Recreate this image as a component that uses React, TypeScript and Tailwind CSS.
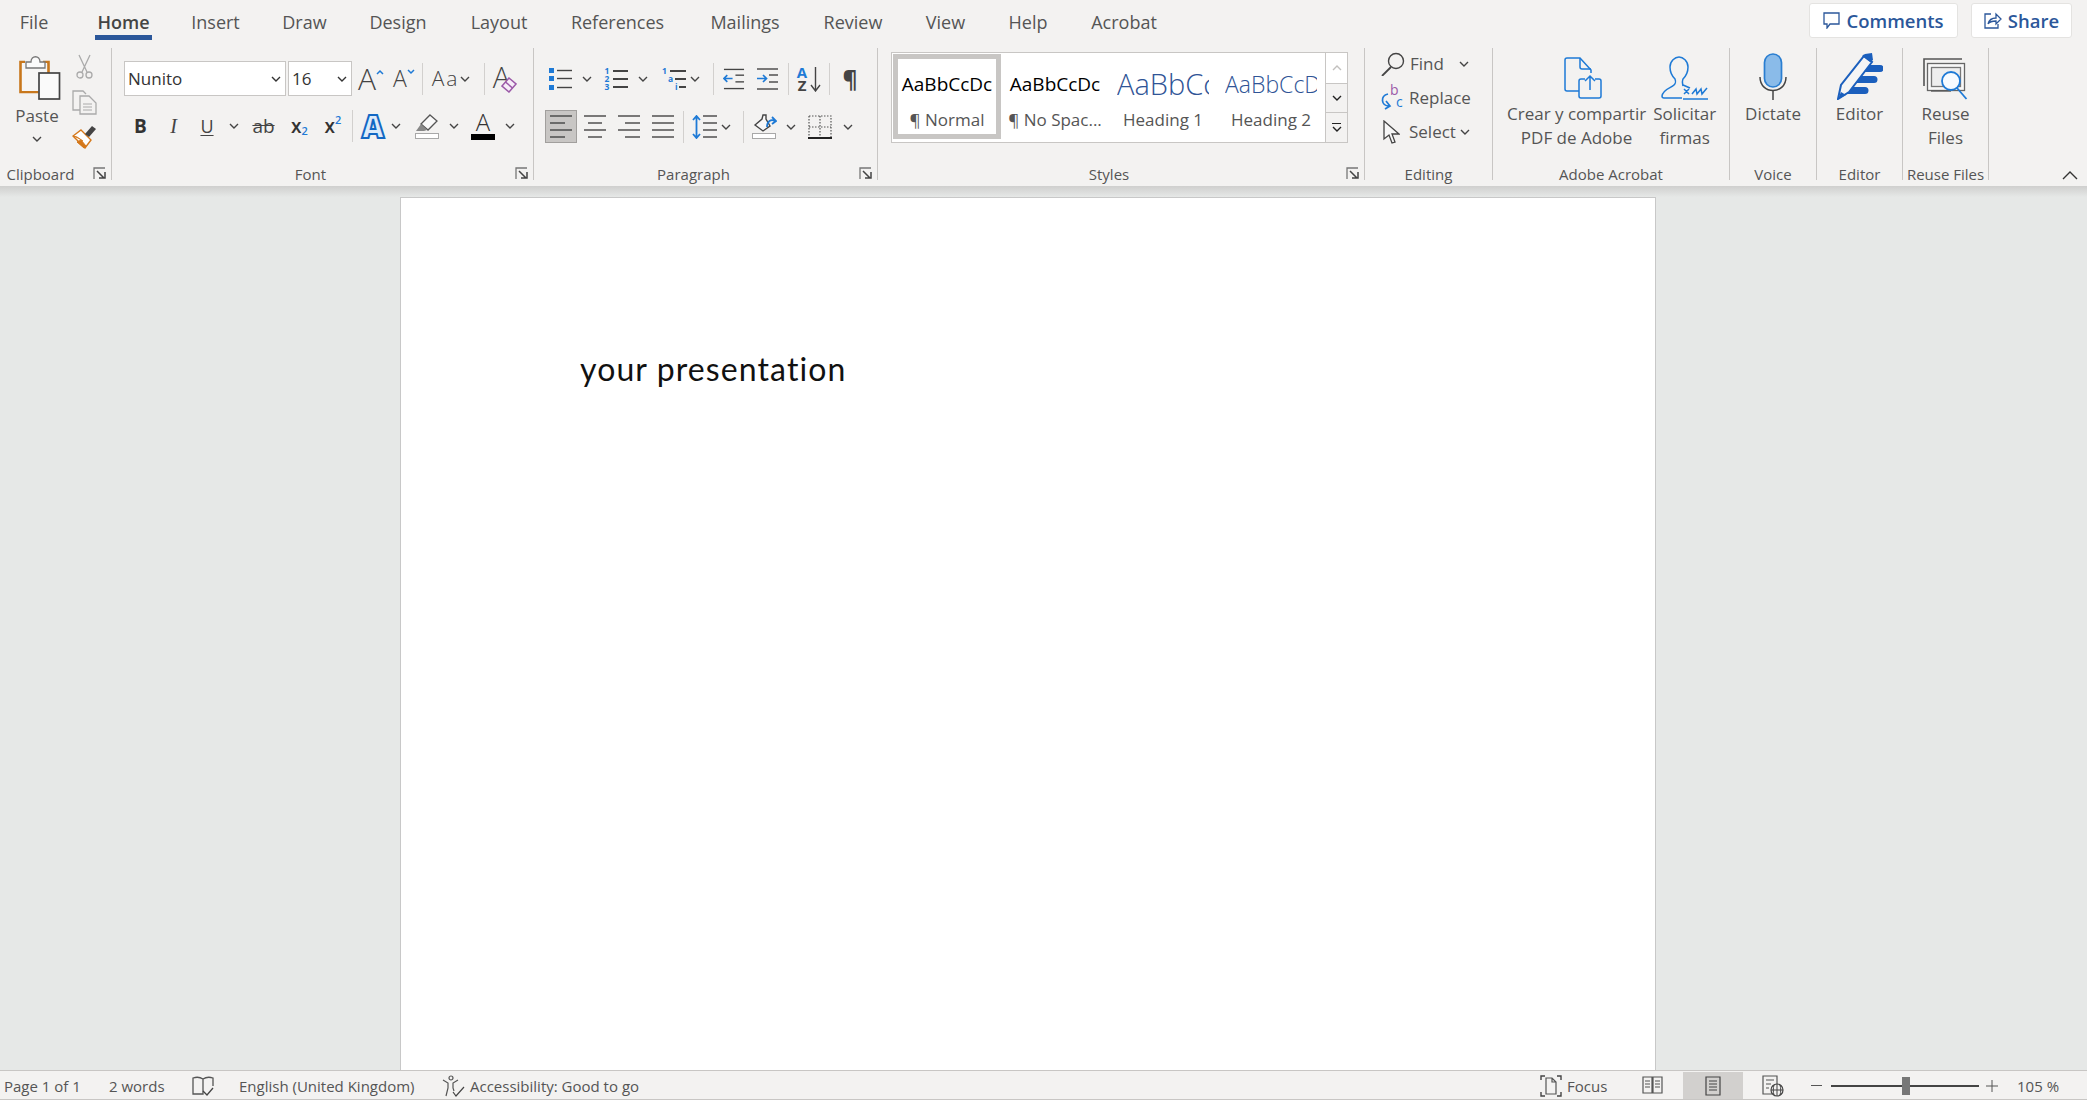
import React from "react";

const ink = "#444444";
const blue = "#1e7ad6";

function Chev({ className = "", c = "#444" }: { className?: string; c?: string }) {
  return (
    <svg width="10" height="6" viewBox="0 0 10 6" className={`shrink-0 ${className}`}>
      <path d="M1 1l4 4 4-4" fill="none" stroke={c} strokeWidth="1.4" />
    </svg>
  );
}

function Launcher() {
  return (
    <svg width="13" height="13" viewBox="0 0 13 13" className="absolute right-[5px] bottom-[4px]">
      <path d="M1 12V1h11" fill="none" stroke="#777" strokeWidth="1.3" />
      <path d="M4 4l7 7M6 11h6V5" fill="none" stroke="#444" strokeWidth="1.5" />
    </svg>
  );
}

function Group({ w, label, launcher, children }: { w: string; label: string; launcher?: boolean; children: React.ReactNode }) {
  return (
    <div className={`${w} h-[132px] flex flex-col border-r border-[#c8c6c4] shrink-0`}>
      <div className="flex-1 min-h-0">{children}</div>
      <div className="relative h-[20px] mb-[-4px] flex justify-center items-center text-[15px] leading-[20px] text-[#555] whitespace-nowrap">
        <span className={launcher ? (label === "Clipboard" ? "pr-[30px]" : "pr-[24px]") : ""}>{label}</span>
        {launcher && <Launcher />}
      </div>
    </div>
  );
}

function VSep({ className = "" }: { className?: string }) {
  return <div className={`w-px h-[32px] bg-[#d2d0ce] shrink-0 ${className}`} />;
}

function Slot({ w, children }: { w: string; children?: React.ReactNode }) {
  return <div className={`${w} shrink-0 h-full flex items-center justify-center`}>{children}</div>;
}

function PasteIcon() {
  return (
    <svg width="42" height="46" viewBox="0 0 42 46" className="ml-[6px]">
      <path d="M6 8H1.5v30h18M24 8h5.500v11" fill="#fff" stroke="#c8771c" strokeWidth="2.600" />
      <rect x="3" y="9" width="25" height="28" fill="#f7f6f5" />
      <path d="M7 14V8h5c0-7 9-7 9 0h5v6z" fill="#fbfbfb" stroke="#777" strokeWidth="1.300" />
      <rect x="20" y="19" width="20.500" height="26" fill="#fafafa" stroke="#444" strokeWidth="1.700" />
    </svg>
  );
}
function CutIcon() {
  return (
    <svg width="17" height="26" viewBox="0 0 17 26">
      <path d="M3 1l8 17M14 1L6 18" fill="none" stroke="#aaa" strokeWidth="1.300" />
      <circle cx="4" cy="21" r="3" fill="none" stroke="#aaa" strokeWidth="1.300" />
      <circle cx="13" cy="21" r="3" fill="none" stroke="#aaa" strokeWidth="1.300" />
    </svg>
  );
}
function CopyIcon() {
  return (
    <svg width="25" height="25" viewBox="0 0 25 25">
      <path d="M8 20H1V1h10l3 3" fill="none" stroke="#aaa" strokeWidth="1.300" />
      <path d="M8 6h9l7 7v11H8z" fill="#f3f2f1" stroke="#aaa" strokeWidth="1.300" />
      <path d="M11 14h9M11 17h9M11 20h9" stroke="#aaa" />
    </svg>
  );
}
function PainterIcon() {
  return (
    <svg width="25" height="24" viewBox="0 0 25 24">
      <path d="M9 5l10 10-6 8L1 11z" fill="#fff" stroke="#d5781a" strokeWidth="1.400" />
      <path d="M5 17l4-2 5 6-2 2zM1 11l4 1 6 4" fill="#d5781a" stroke="#d5781a" />
      <path d="M13 9l7-8 4 3-7 8z" fill="#444" />
    </svg>
  );
}

function Sel({ w, v }: { w: string; v: string }) {
  return (
    <div className={`${w} h-[35px] bg-white border border-[#c8c6c4] flex items-center justify-between pl-[3px] pr-[4px] text-[17px] text-[#333] shrink-0`}>
      <span>{v}</span>
      <Chev c="#333" />
    </div>
  );
}

function Lines({ x = 0, rows, w = 20 }: { x?: number; rows: number[]; w?: number }) {
  return (
    <>
      {rows.map((y) => (
        <line key={y} x1={x} x2={x + w} y1={y} y2={y} stroke={ink} strokeWidth="1.400" />
      ))}
    </>
  );
}

function Bullets() {
  return (
    <svg width="24" height="24" viewBox="0 0 24 24">
      <rect x="0" y="1" width="5" height="5" fill={blue} />
      <rect x="0" y="9" width="5" height="5" fill={blue} />
      <rect x="0" y="18" width="5" height="5" fill={blue} />
      <Lines x={8} rows={[3.500, 11.500, 20.500]} w={15} />
    </svg>
  );
}

function ListRow({ mark, boxW, lineW }: { mark: string; boxW: string; lineW: string }) {
  return (
    <div className="h-[8px] flex items-center justify-end">
      <span className={`${boxW} text-[8.500px] leading-[8px] font-bold text-[#1e7ad6]`}>{mark}</span>
      <div className={`${lineW} h-[1.500px] bg-[#444]`} />
    </div>
  );
}
function Numbers() {
  return (
    <div className="w-[23px] flex flex-col">
      <ListRow mark="1" boxW="w-[8px]" lineW="w-[15px]" />
      <ListRow mark="2" boxW="w-[8px]" lineW="w-[15px]" />
      <ListRow mark="3" boxW="w-[8px]" lineW="w-[15px]" />
    </div>
  );
}
function Multi() {
  return (
    <div className="w-[24px] flex flex-col">
      <ListRow mark="1" boxW="w-[8px]" lineW="w-[16px]" />
      <ListRow mark="a" boxW="w-[7px]" lineW="w-[11px]" />
      <ListRow mark="i" boxW="w-[4px]" lineW="w-[7px]" />
    </div>
  );
}
function Indent({ dir }: { dir: "l" | "r" }) {
  return (
    <svg width="23" height="22" viewBox="0 0 23 22">
      <Lines x={1} rows={[1]} w={21} />
      <Lines x={13} rows={[7, 14]} w={9} />
      <Lines x={1} rows={[21]} w={21} />
      {dir === "l" ? (
        <path d="M10 10.500H1M4.500 7l-3.500 3.500L4.500 14" fill="none" stroke={blue} strokeWidth="1.700" />
      ) : (
        <path d="M1 10.500h9M7 7l3.500 3.500L7 14" fill="none" stroke={blue} strokeWidth="1.700" />
      )}
    </svg>
  );
}
function SortIcon() {
  return (
    <div className="flex items-center gap-[3px]">
      <div className="flex flex-col items-center text-[15px] leading-[13px] font-bold">
        <span className="text-[#1e7ad6]">A</span>
        <span className="text-[#444]">Z</span>
      </div>
      <svg width="11" height="25" viewBox="0 0 11 25">
        <path d="M5.500 0v24M1 18l4.500 6 4.500-6" fill="none" stroke={ink} strokeWidth="1.400" />
      </svg>
    </div>
  );
}
function AlignIcon({ kind }: { kind: "l" | "c" | "r" | "j" }) {
  const rows = [1, 8, 15, 22];
  const spec: Record<string, [number, number][]> = {
    l: [[0, 22], [0, 15], [0, 22], [0, 15]],
    c: [[0, 22], [4, 14], [0, 22], [4, 14]],
    r: [[0, 22], [7, 15], [0, 22], [7, 15]],
    j: [[0, 22], [0, 22], [0, 22], [0, 22]],
  };
  return (
    <svg width="22" height="23" viewBox="0 0 22 23">
      {rows.map((y, i) => (
        <line key={y} x1={spec[kind][i][0]} x2={spec[kind][i][0] + spec[kind][i][1]} y1={y} y2={y} stroke={ink} strokeWidth="1.400" />
      ))}
    </svg>
  );
}
function Spacing() {
  return (
    <svg width="25" height="24" viewBox="0 0 25 24">
      <path d="M4.500 1v22M1 5l3.500-4L8 5M1 19l3.500 4L8 19" fill="none" stroke={blue} strokeWidth="1.800" />
      <Lines x={11} rows={[1, 8, 15, 22]} w={14} />
    </svg>
  );
}
function Shading() {
  return (
    <svg width="25" height="25" viewBox="0 0 25 25">
      <path d="M3 11l7-6 1-4h3v4l4 7-7 5z" fill="#f8f8f8" stroke={ink} strokeWidth="1.400" />
      <path d="M15 13c0-6 4-8 8-6M20 3l4 4-4 3" fill="none" stroke={blue} strokeWidth="1.800" />
      <rect x="0.500" y="19.500" width="23" height="5" fill="#fff" stroke="#a8a8a8" />
    </svg>
  );
}
function Borders() {
  return (
    <svg width="24" height="24" viewBox="0 0 24 24">
      <path d="M1 1h22v22M1 1v22M12 1v22M1 12h22" fill="none" stroke="#555" strokeWidth="1.200" strokeDasharray="1.500 1.500" />
      <path d="M0 23h24" stroke="#222" strokeWidth="2" />
    </svg>
  );
}
function Highlighter() {
  return (
    <svg width="24" height="25" viewBox="0 0 24 25">
      <path d="M15 1l7 6-9 9-7-6z" fill="#f9f9f9" stroke="#555" strokeWidth="1.300" />
      <path d="M6 10l6 6-3 1H1z" fill="#888" />
      <rect x="0.500" y="19.500" width="23" height="5" fill="#fff" stroke="#a8a8a8" />
    </svg>
  );
}
function ClearFmt() {
  return (
    <svg width="16" height="16" viewBox="0 0 16 16" className="ml-[-9px] mt-[12px] shrink-0">
      <path d="M8 1l7 6-7 8-7-6z" fill="#f6edf8" stroke="#9b59a8" strokeWidth="1.500" />
      <path d="M4.500 5l7 6" stroke="#9b59a8" strokeWidth="1.500" />
    </svg>
  );
}

function FindIcon() {
  return (
    <svg width="24" height="24" viewBox="0 0 24 24">
      <circle cx="15" cy="9" r="7.500" fill="none" stroke={ink} strokeWidth="1.400" />
      <path d="M10 15L1 24" stroke={ink} strokeWidth="1.800" />
    </svg>
  );
}
function ReplaceIcon() {
  return (
    <div className="relative w-[22px] h-[24px] text-[14px] leading-[14px]">
      <span className="absolute left-[9px] top-[-3px] text-[#9b59a8]">b</span>
      <span className="absolute left-[15px] top-[9px] text-[#1e7ad6]">c</span>
      <svg width="12" height="18" viewBox="0 0 12 18" className="absolute left-0 top-[6px]">
        <path d="M7 2C-1 4 0 14 8 14M5 9l4 5-5 3" fill="none" stroke={blue} strokeWidth="1.700" />
      </svg>
    </div>
  );
}
function SelectIcon() {
  return (
    <svg width="17" height="24" viewBox="0 0 17 24">
      <path d="M1 1v18l5-4 3 8 3-1-3-8h7z" fill="#f7f7f7" stroke={ink} strokeWidth="1.300" />
    </svg>
  );
}
function CreatePdf() {
  return (
    <svg width="38" height="43" viewBox="0 0 38 43">
      <path d="M15 34H3a2 2 0 0 1-2-2V3a2 2 0 0 1 2-2h13l11 12v3" fill="none" stroke={blue} strokeWidth="1.500" />
      <path d="M16 1v9a2 2 0 0 0 2 2h9" fill="none" stroke={blue} strokeWidth="1.500" />
      <path d="M21 22h-4a2 2 0 0 0-2 2v15a2 2 0 0 0 2 2h18a2 2 0 0 0 2-2V24a2 2 0 0 0-2-2h-4" fill="#f3f2f1" stroke={blue} strokeWidth="1.500" />
      <path d="M26 33V20M21 24l5-5 5 5" fill="none" stroke={blue} strokeWidth="1.500" />
    </svg>
  );
}
function Signature() {
  return (
    <svg width="48" height="44" viewBox="0 0 48 44">
      <path d="M22 30c-1-5-1-4 0-7 3-3 5-7 5-12 0-6-5-10-9-10s-9 4-9 10c0 5 2 9 5 12 1 3 1 4-1 6-3 3-11 4-12 11 0 1 1 2 2 2h18" fill="none" stroke={blue} strokeWidth="1.500" />
      <path d="M22 29l7 3" stroke={blue} strokeWidth="1.500" />
      <path d="M23 33l5 5M28 33l-5 5M31 38l4-5 1 5 4-5 1 5 5-6" fill="none" stroke={blue} strokeWidth="1.500" />
      <path d="M22 43h25" stroke={blue} strokeWidth="1.500" />
    </svg>
  );
}
function Mic() {
  return (
    <svg width="28" height="47" viewBox="0 0 28 47">
      <rect x="5.500" y="1" width="17" height="33" rx="8.500" fill="#8abbe9" stroke="#2a7ed1" strokeWidth="1.700" />
      <path d="M1 24c0 18 26 18 26 0" fill="none" stroke="#444" strokeWidth="1.500" />
      <path d="M14 37v10" stroke="#444" strokeWidth="1.500" />
    </svg>
  );
}
function EditorIcon() {
  return (
    <svg width="46" height="48" viewBox="0 0 46 48">
      <path d="M26 13h17a3.500 3.500 0 0 1 0 7H20zM18 24h19a3.500 3.500 0 0 1 0 7H12zM10 35h18a3.500 3.500 0 0 1 0 7H5z" fill="#1b5fbd" />
      <path d="M1 47l3-14L27 4l8 6-23 30z" fill="#f5f5f5" stroke="#1b5fbd" strokeWidth="2" />
      <path d="M28 2l7-1 1 7-3 2-8-6z" fill="#1b5fbd" />
      <path d="M1 47l3-7 5 3z" fill="#1b5fbd" />
    </svg>
  );
}
function ReuseIcon() {
  return (
    <svg width="45" height="42" viewBox="0 0 45 42">
      <path d="M1 28V1h38" fill="none" stroke="#555" strokeWidth="1.600" />
      <rect x="4.500" y="5.500" width="37" height="27" fill="#f8f8f8" stroke="#666" strokeWidth="1.300" />
      <rect x="8.500" y="9.500" width="29" height="19" fill="#eee" stroke="#777" strokeWidth="1.300" />
      <path d="M8 33h20" stroke="#555" strokeWidth="1.300" />
      <circle cx="28" cy="23" r="9" fill="#f7fbff" stroke={blue} strokeWidth="1.800" />
      <path d="M34 30l9.500 11" stroke={blue} strokeWidth="1.800" />
    </svg>
  );
}

function BigBtn({ icon, lines, iconBox }: { icon: React.ReactNode; lines: string[]; iconBox: string }) {
  return (
    <div className="flex flex-col items-center text-[17px] leading-[24px] text-[#555] whitespace-nowrap">
      <div className={`${iconBox} flex items-end justify-center`}>{icon}</div>
      {lines.map((l) => (
        <span key={l}>{l}</span>
      ))}
    </div>
  );
}

const tabs: [string, string][] = [
  ["File", "w-[30px] ml-[19px]"],
  ["Home", "w-[57px] ml-[46px]"],
  ["Insert", "w-[47px] ml-[40px]"],
  ["Draw", "w-[45px] ml-[43px]"],
  ["Design", "w-[60px] ml-[41px]"],
  ["Layout", "w-[58px] ml-[42px]"],
  ["References", "w-[91px] ml-[44px]"],
  ["Mailings", "w-[74px] ml-[45px]"],
  ["Review", "w-[60px] ml-[41px]"],
  ["View", "w-[41px] ml-[42px]"],
  ["Help", "w-[40px] ml-[42px]"],
  ["Acrobat", "w-[70px] ml-[41px]"],
];

export default function App() {
  return (
    <div className="w-full h-screen overflow-hidden flex flex-col bg-[#e6e8e7] font-['Open_Sans',sans-serif] text-[#444]">
      <header className="bg-[#f3f2f1] h-[186px] shrink-0 flex flex-col">
        <div className="h-[46px] flex items-start shrink-0">
          {tabs.map(([t, cl]) => (
            <div key={t} className={`${cl} shrink-0 h-[40px] flex justify-center pt-[9px] text-[18px] leading-[26px] whitespace-nowrap ${t === "Home" ? "border-b-[5px] border-[#2b579a] font-semibold text-[#444]" : "text-[#555]"}`}>
              {t}
            </div>
          ))}
          <div className="ml-auto flex pt-[3px] pr-[15px] gap-[13px]">
            <div className="w-[149px] h-[35px] bg-white rounded-[3px] border border-[#e4e3e1] flex items-center justify-center gap-[6px] text-[#2b579a] text-[18.500px] font-semibold">
              <svg width="17" height="17" viewBox="0 0 17 17">
                <path d="M1 1h15v11H7l-3 4v-4H1z" fill="none" stroke="#2b579a" strokeWidth="1.300" />
              </svg>
              Comments
            </div>
            <div className="w-[101px] h-[35px] bg-white rounded-[3px] border border-[#e4e3e1] flex items-center justify-center gap-[6px] text-[#2b579a] text-[18.500px] font-semibold">
              <svg width="18" height="17" viewBox="0 0 18 17">
                <path d="M7 2H1v14h13v-4" fill="none" stroke="#2b579a" strokeWidth="1.300" />
                <path d="M4 12c1-4 4-6 8-6V2l5 5-5 5V9c-3 0-6 0-8 3z" fill="none" stroke="#2b579a" strokeWidth="1.300" />
              </svg>
              Share
            </div>
          </div>
        </div>

        <div className="flex h-[140px] pt-[2px] items-start">
          <Group w="w-[112px]" label="Clipboard" launcher>
            <div className="flex h-full pt-[6px]">
              <div className="w-[72px] pl-[2px] flex flex-col items-center">
                <PasteIcon />
                <span className="text-[17px] leading-[24px] mt-[4px] text-[#555]">Paste</span>
                <Chev className="mt-[8px]" />
              </div>
              <div className="flex flex-col items-center gap-[10px] w-[24px]">
                <CutIcon />
                <CopyIcon />
                <PainterIcon />
              </div>
            </div>
          </Group>

          <Group w="w-[422px]" label="Font" launcher>
            <div className="pl-[12px] pt-[13px]">
              <div className="flex items-center h-[35px]">
                <Sel w="w-[162px]" v="Nunito" />
                <Sel w="w-[64px] ml-[2px]" v="16" />
                <Slot w="w-[28px] ml-[5px]">
                  <span className="text-[30px] font-light text-[#444] leading-none">A</span>
                  <svg width="8" height="6" viewBox="0 0 8 6" className="mb-[14px] shrink-0"><path d="M1 5l3-3 3 3" fill="none" stroke={blue} strokeWidth="1.500" /></svg>
                </Slot>
                <Slot w="w-[24px] ml-[7px]">
                  <span className="text-[23px] font-light text-[#444] leading-none">A</span>
                  <svg width="8" height="6" viewBox="0 0 8 6" className="mb-[14px] shrink-0"><path d="M1 1l3 3 3-3" fill="none" stroke={blue} strokeWidth="1.500" /></svg>
                </Slot>
                <VSep className="ml-[6px]" />
                <Slot w="w-[40px] ml-[8px]">
                  <span className="text-[21px] tracking-[2px] font-light leading-none">Aa</span>
                  <Chev className="ml-[1px]" />
                </Slot>
                <VSep className="ml-[13px]" />
                <Slot w="w-[26px] ml-[7px]">
                  <span className="text-[29px] font-light leading-none mb-[4px]">A</span>
                  <ClearFmt />
                </Slot>
              </div>
              <div className="flex items-center h-[36px] mt-[12px]">
                <Slot w="w-[33px]"><span className="text-[19px] font-bold text-[#333]">B</span></Slot>
                <Slot w="w-[33px]"><span className="text-[20px] italic font-['Liberation_Serif',serif] text-[#444]">I</span></Slot>
                <Slot w="w-[34px]"><span className="text-[18px] underline underline-offset-2 text-[#444]">U</span></Slot>
                <Slot w="w-[19px]"><Chev /></Slot>
                <Slot w="w-[41px]"><span className="text-[19px] line-through text-[#444]">ab</span></Slot>
                <Slot w="w-[31px]"><span className="text-[19px] font-semibold text-[#333] leading-none">x</span><span className="text-[11px] font-semibold text-[#1e7ad6] mt-[10px]">2</span></Slot>
                <Slot w="w-[36px]"><span className="text-[19px] font-semibold text-[#333] leading-none">x</span><span className="text-[11px] font-semibold text-[#1e7ad6] mb-[12px]">2</span></Slot>
                <VSep className="ml-[1px]" />
                <Slot w="w-[34px] ml-[3px]"><span className="text-[31px] font-extrabold leading-none text-[#dcebfa] [-webkit-text-stroke:2px_#1268c4]">A</span></Slot>
                <Slot w="w-[11px] mr-[9px]"><Chev /></Slot>
                <Slot w="w-[34px]"><Highlighter /></Slot>
                <Slot w="w-[19px] mr-[2px]"><Chev /></Slot>
                <Slot w="w-[36px]">
                  <div className="flex flex-col items-center">
                    <span className="text-[24px] font-light leading-[20px] text-[#333]">A</span>
                    <div className="w-[24px] h-[6px] bg-black mt-[2px]" />
                  </div>
                </Slot>
                <Slot w="w-[17px]"><Chev /></Slot>
              </div>
            </div>
          </Group>

          <Group w="w-[344px]" label="Paragraph" launcher>
            <div className="pl-[11px] pt-[15px]">
              <div className="flex items-center h-[32px]">
                <Slot w="w-[31px]"><Bullets /></Slot>
                <Slot w="w-[22px]"><Chev /></Slot>
                <Slot w="w-[36px]"><Numbers /></Slot>
                <Slot w="w-[18px]"><Chev /></Slot>
                <Slot w="w-[26px] ml-[9px]"><Multi /></Slot>
                <Slot w="w-[16px]"><Chev /></Slot>
                <Slot w="w-[20px]"><VSep /></Slot>
                <Slot w="w-[22px]"><Indent dir="l" /></Slot>
                <Slot w="w-[42px] ml-[1px]"><Indent dir="r" /></Slot>
                <VSep />
                <Slot w="w-[40px]"><SortIcon /></Slot>
                <VSep />
                <Slot w="w-[40px]"><span className="text-[23px] font-bold text-[#444] leading-none">¶</span></Slot>
              </div>
              <div className="flex items-center h-[33px] mt-[15px]">
                <div className="w-[32px] h-[33px] bg-[#c8c6c4] border border-[#a19f9d] flex items-center justify-center shrink-0"><AlignIcon kind="l" /></div>
                <Slot w="w-[35px]"><AlignIcon kind="c" /></Slot>
                <Slot w="w-[34px]"><AlignIcon kind="r" /></Slot>
                <Slot w="w-[33px]"><AlignIcon kind="j" /></Slot>
                <Slot w="w-[8px]"><VSep /></Slot>
                <Slot w="w-[34px]"><Spacing /></Slot>
                <Slot w="w-[10px]"><Chev /></Slot>
                <VSep className="ml-[12px]" />
                <Slot w="w-[41px]"><Shading /></Slot>
                <Slot w="w-[12px]"><Chev /></Slot>
                <Slot w="w-[46px]"><Borders /></Slot>
                <Slot w="w-[10px]"><Chev /></Slot>
              </div>
            </div>
          </Group>

          <Group w="w-[487px]" label="Styles" launcher>
            <div className="pl-[13px] pt-[4px]">
              <div className="w-[457px] h-[91px] flex bg-white border border-[#c8c6c4]">
                <div className="w-[108px] h-[85px] ml-[1px] mt-[1px] border-[5px] border-[#c8c6c4] flex flex-col items-center shrink-0">
                  <span className="w-[95px] overflow-hidden whitespace-nowrap text-[19px] leading-[24px] mt-[13px] text-black text-center">AaBbCcDc</span>
                  <span className="text-[17px] leading-[24px] mt-[12px] text-[#555]">¶ Normal</span>
                </div>
                <div className="w-[108px] flex flex-col items-center shrink-0">
                  <span className="w-[92px] text-center overflow-hidden whitespace-nowrap text-[19px] leading-[24px] mt-[19px] text-black font-medium">AaBbCcDc</span>
                  <span className="text-[17px] leading-[24px] mt-[12px] text-[#555]">¶ No Spac...</span>
                </div>
                <div className="w-[108px] flex flex-col items-center shrink-0">
                  <span className="w-[92px] overflow-hidden whitespace-nowrap text-[29px] leading-[36px] mt-[13px] text-[#2f5496] font-light">AaBbCc</span>
                  <span className="text-[17px] leading-[24px] mt-[6px] text-[#555]">Heading 1</span>
                </div>
                <div className="w-[108px] flex flex-col items-center shrink-0">
                  <span className="w-[92px] overflow-hidden whitespace-nowrap text-[23px] leading-[36px] mt-[13px] text-[#2f5496] font-light">AaBbCcD</span>
                  <span className="text-[17px] leading-[24px] mt-[6px] text-[#555]">Heading 2</span>
                </div>
                <div className="w-[22px] ml-auto flex flex-col shrink-0 border-l border-[#c8c6c4]">
                  <div className="h-[31px] flex items-center justify-center border-b border-[#c8c6c4]"><Chev c="#c2c0be" className="rotate-180" /></div>
                  <div className="h-[29px] flex items-center justify-center border-b border-[#c8c6c4] bg-[#f3f2f1]"><Chev c="#222" /></div>
                  <div className="flex-1 flex flex-col items-center justify-center gap-[2px] bg-[#f3f2f1]">
                    <div className="w-[9px] h-[1.500px] bg-[#222]" />
                    <Chev c="#222" />
                  </div>
                </div>
              </div>
            </div>
          </Group>

          <Group w="w-[128px]" label="Editing">
            <div className="pl-[16px] text-[17px] text-[#555] leading-[24px]">
              <div className="flex items-center h-[35px] mt-[-2px]">
                <div className="w-[29px]"><FindIcon /></div>
                <span>Find</span>
                <Chev className="ml-[15px]" />
              </div>
              <div className="flex items-center h-[34px]">
                <div className="w-[28px]"><ReplaceIcon /></div>
                <span>Replace</span>
              </div>
              <div className="flex items-center h-[34px]">
                <div className="w-[28px] pl-[2px]"><SelectIcon /></div>
                <span>Select</span>
                <Chev className="ml-[4px]" />
              </div>
            </div>
          </Group>

          <Group w="w-[237px]" label="Adobe Acrobat">
            <div className="flex pt-[7px] pl-[14px] gap-[7px]">
              <BigBtn iconBox="h-[45px] mb-[2px] ml-[12px]" icon={<CreatePdf />} lines={["Crear y compartir", "PDF de Adobe"]} />
              <BigBtn iconBox="h-[45px] mb-[2px]" icon={<Signature />} lines={["Solicitar", "firmas"]} />
            </div>
          </Group>

          <Group w="w-[87px]" label="Voice">
            <div className="flex justify-center pt-[3px]"><BigBtn iconBox="h-[49px] mb-[2px]" icon={<Mic />} lines={["Dictate"]} /></div>
          </Group>
          <Group w="w-[86px]" label="Editor">
            <div className="flex justify-center pt-[3px]"><BigBtn iconBox="h-[49px] mb-[2px]" icon={<EditorIcon />} lines={["Editor"]} /></div>
          </Group>
          <Group w="w-[86px]" label="Reuse Files">
            <div className="flex justify-center pt-[3px]"><BigBtn iconBox="h-[49px] mb-[2px]" icon={<ReuseIcon />} lines={["Reuse", "Files"]} /></div>
          </Group>
          <div className="flex-1 h-[132px] flex items-end justify-end pr-[9px] pb-[0px]">
            <svg width="16" height="9" viewBox="0 0 16 9"><path d="M1 8l7-7 7 7" fill="none" stroke="#333" strokeWidth="1.400" /></svg>
          </div>
        </div>
      </header>

      <div className="h-[11px] shrink-0 bg-gradient-to-b from-[#cfcfce] to-[#e6e8e7]" />

      <main className="flex-1 min-h-0 pl-[400px]">
        <div className="w-[1256px] h-full bg-white border-x border-t border-[#c8c8c8] pl-[179px] pt-[149px]">
          <p className="font-['Lato',sans-serif] text-[32px] leading-[44px] tracking-[1.100px] text-[#111]">your presentation</p>
        </div>
      </main>

      <footer className="h-[30px] shrink-0 bg-[#f3f2f1] border-t border-b border-[#c8c6c4] flex items-center text-[15px] leading-[22px] pt-[1px] text-[#555] whitespace-nowrap">
        <span className="ml-[4px] w-[76px]">Page 1 of 1</span>
        <span className="ml-[29px] w-[56px]">2 words</span>
        <svg width="22" height="20" viewBox="0 0 22 20" className="ml-[27px]">
          <path d="M11 3C8 1 4 1 1 2v16h10V3c3-2 7-2 10-1v8M11 18h0" fill="none" stroke="#555" strokeWidth="1.300" />
          <path d="M11 15l4 4 6-7" fill="none" stroke="#444" strokeWidth="1.300" />
        </svg>
        <span className="ml-[25px] w-[178px]">English (United Kingdom)</span>
        <svg width="23" height="22" viewBox="0 0 23 22" className="ml-[25px]">
          <circle cx="9" cy="3" r="2" fill="none" stroke="#555" strokeWidth="1.200" />
          <path d="M1 5l5 3v5l-2 8M16 5l-5 3v5l1 3" fill="none" stroke="#555" strokeWidth="1.200" />
          <path d="M11 17l3 4 8-9" fill="none" stroke="#444" strokeWidth="1.200" />
        </svg>
        <span className="ml-[5px]">Accessibility: Good to go</span>
        <div className="ml-auto flex items-center h-full">
          <svg width="22" height="22" viewBox="0 0 22 22">
            <path d="M1 5V1h4M17 1h4v4M1 17v4h4M17 21h4v-4" fill="none" stroke="#444" strokeWidth="1.400" />
            <path d="M6 19V3h6l4 4v12zM12 3v4h4" fill="none" stroke="#555" strokeWidth="1.200" />
          </svg>
          <span className="ml-[5px] w-[40px]">Focus</span>
          <svg width="21" height="20" viewBox="0 0 21 20" className="ml-[35px]">
            <path d="M1 1h9v16H1zM11 1h9v16h-9zM3 5h5M3 8h5M3 11h5M13 5h5M13 8h5M13 11h5" fill="none" stroke="#555" strokeWidth="1.200" />
          </svg>
          <div className="ml-[20px] w-[60px] h-full bg-[#d2d0ce] flex items-center justify-center">
            <svg width="16" height="20" viewBox="0 0 16 20">
              <path d="M1 1h14v18H1zM4 5h8M4 8h8M4 11h8M4 14h8" fill="none" stroke="#444" strokeWidth="1.200" />
            </svg>
          </div>
          <svg width="22" height="22" viewBox="0 0 22 22" className="ml-[19px]">
            <path d="M10 19H1V1h14v9M4 5h8M4 9h5M4 13h3" fill="none" stroke="#555" strokeWidth="1.200" />
            <circle cx="15" cy="15" r="6" fill="#f3f2f1" stroke="#444" strokeWidth="1.200" />
            <path d="M9 15h12M15 9v12M12 10c-1 3-1 7 0 10M18 10c1 3 1 7 0 10" fill="none" stroke="#444" />
          </svg>
          <div className="ml-[27px] w-[11px] h-px bg-[#555]" />
          <div className="ml-[9px] w-[148px] h-[2px] bg-[#444] flex items-center">
            <div className="ml-[71px] w-[8px] h-[18px] bg-[#777]" />
          </div>
          <svg width="12" height="12" viewBox="0 0 12 12" className="ml-[7px]"><path d="M0 6h12M6 0v12" stroke="#555" /></svg>
          <span className="ml-[19px] mr-[27px] w-[43px]">105 %</span>
        </div>
      </footer>
    </div>
  );
}
